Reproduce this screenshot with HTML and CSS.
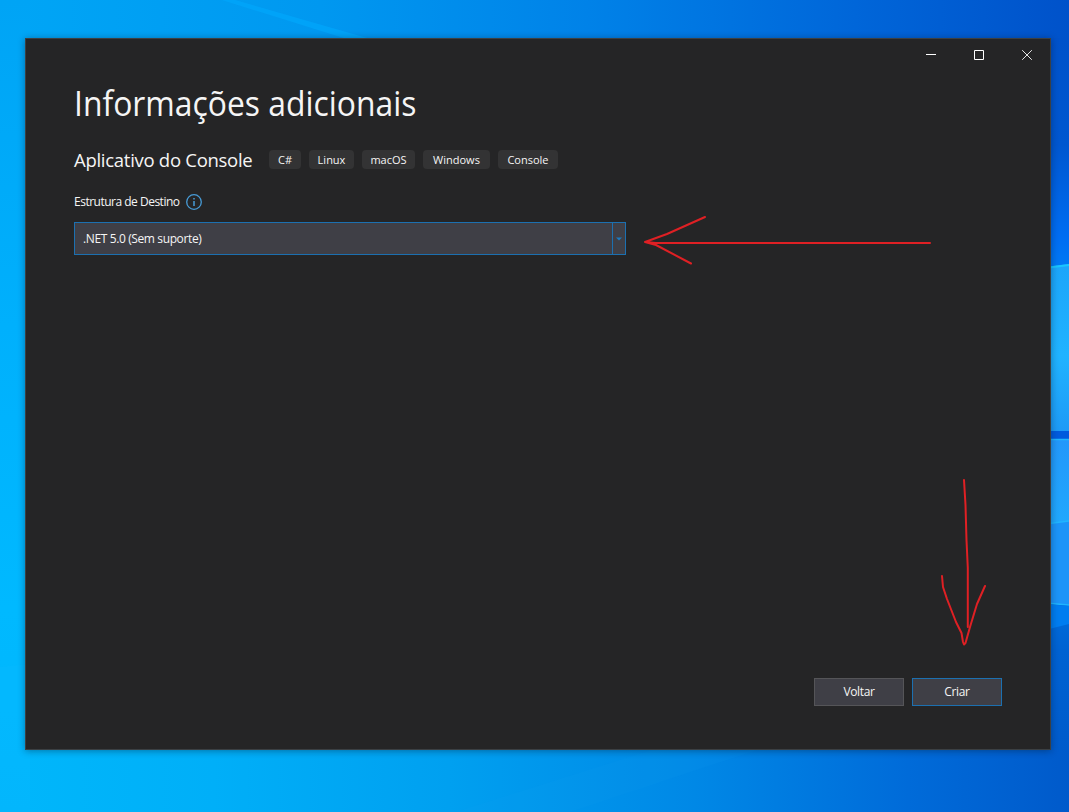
FILE: index.html
```html
<!DOCTYPE html>
<html lang="pt-BR">
<head>
<meta charset="utf-8">
<title>Informações adicionais</title>
<link rel="stylesheet" href="styles.css">
</head>
<body>
<div class="desktop">
  <svg class="wallpaper" width="1069" height="812" viewBox="0 0 1069 812" aria-hidden="true">
    <defs>
      <linearGradient id="top" x1="0" x2="1" y1="0" y2="0"><stop offset="0" stop-color="#00a6f6"/><stop offset=".3" stop-color="#0098f0"/><stop offset=".55" stop-color="#0082e8"/><stop offset=".8" stop-color="#0066d9"/><stop offset="1" stop-color="#0052ca"/></linearGradient>
      <linearGradient id="bottom" x1="0" x2="1" y1="0" y2="0"><stop offset="0" stop-color="#00b7fb"/><stop offset=".2" stop-color="#00aff8"/><stop offset=".42" stop-color="#00a0f0"/><stop offset=".65" stop-color="#0088e6"/><stop offset=".85" stop-color="#006bd9"/><stop offset="1" stop-color="#005acb"/></linearGradient>
      <linearGradient id="left" x1="0" x2="0" y1="0" y2="1"><stop offset="0" stop-color="#00a4f5"/><stop offset=".4" stop-color="#00b0fc"/><stop offset=".75" stop-color="#00b9ff"/><stop offset="1" stop-color="#00b5fb"/></linearGradient>
      <linearGradient id="right" x1="0" x2="0" y1="0" y2="1"><stop offset="0" stop-color="#0052ca"/><stop offset=".15" stop-color="#0057d0"/><stop offset=".28" stop-color="#006df2"/><stop offset=".34" stop-color="#007df4"/><stop offset=".78" stop-color="#0070de"/><stop offset=".86" stop-color="#0062d2"/><stop offset="1" stop-color="#005bcb"/></linearGradient>
      <linearGradient id="pane" x1="0" x2="0" y1="0" y2="1"><stop offset="0" stop-color="#1ca5fa"/><stop offset=".55" stop-color="#20b3ff"/><stop offset="1" stop-color="#1d9af6"/></linearGradient>
      <linearGradient id="pane2" x1="0" x2="0" y1="0" y2="1"><stop offset="0" stop-color="#2397fa"/><stop offset="1" stop-color="#20a8fd"/></linearGradient>
    </defs>
    <rect width="1069" height="400" fill="url(#top)"/>
    <rect y="400" width="1069" height="412" fill="url(#bottom)"/>
    <rect width="30" height="812" fill="url(#left)"/>
    <rect x="1045" y="38" width="24" height="712" fill="url(#right)"/>
    <path d="M222 0H235L374 40H350Z" fill="#00a6fb" opacity=".7"/>
    <path d="M455 812L655 749H760L570 812Z" fill="#18a0f4" opacity=".08"/>
    <path d="M0 667L30 664V812H0Z" fill="#08baff" opacity=".4"/>
    <path d="M1045 267L1069 264V431H1045Z" fill="url(#pane)"/>
    <path d="M1045 268L1069 265" stroke="#19c5ff" stroke-width="2"/>
    <path d="M1045 431H1069V439H1045Z" fill="#005bdd"/>
    <path d="M1045 439H1069V521L1045 524Z" fill="url(#pane2)"/>
    <path d="M1045 524L1069 521V605L1045 603Z" fill="#1c94f8"/>
    <path d="M1045 439.5H1069M1045 524L1069 521M1045 603L1069 605" stroke="#20b5ff" stroke-width="1.5"/>
    <path d="M1045 604L1069 606V624L1045 630Z" fill="#007df0"/>
  </svg>

  <main class="window">
    <div class="titlebar">
      <svg class="caption" width="12" height="12" viewBox="0 0 12 12"><path d="M1 5.5H11" stroke="#fff"/></svg>
      <svg class="caption" width="12" height="12" viewBox="0 0 12 12"><path d="M1.5 1.5H10.5V10.5H1.5Z" fill="none" stroke="#fff"/></svg>
      <svg class="caption" width="12" height="12" viewBox="0 0 12 12"><path d="M1.2 1.2L10.8 10.8M10.8 1.2L1.2 10.8" stroke="#e6e6e6"/></svg>
    </div>
    <h1 class="title">Informações adicionais</h1>
    <div class="project">
      <h2 class="subtitle">Aplicativo do Console</h2>
      <ul class="tags">
        <li class="tag tag-cs">C#</li><li class="tag tag-linux">Linux</li><li class="tag tag-mac">macOS</li><li class="tag tag-windows">Windows</li><li class="tag tag-console">Console</li>
      </ul>
    </div>
    <div class="field-label">
      <span class="label-text">Estrutura de Destino</span>
      <svg width="16" height="16" viewBox="0 0 16 16"><circle cx="8" cy="8" r="7.3" fill="none" stroke="#479bd6" stroke-width="1.3"/><path d="M8 4V5.6M8 7V12" stroke="#479bd6" stroke-width="1.5"/></svg>
    </div>
    <div class="select">
      <span class="select-value">.NET 5.0 (Sem suporte)</span>
      <span class="select-toggle"><svg width="6" height="4" viewBox="0 0 6 4"><path d="M0 .5H6L3 3.5Z" fill="#1c7ac0"/></svg></span>
    </div>
    <div class="actions">
      <button class="button">Voltar</button>
      <button class="button button-primary">Criar</button>
    </div>
  </main>

  <svg class="annotations" width="1069" height="812" viewBox="0 0 1069 812" aria-hidden="true">
    <path d="M930 243H656L645 242M705 217L667 234L645 242L656 245L691 263.500"/>
    <path d="M964 480L965.500 505L966.500 540L967.800 568V627M942 576L943 587L947 599L956 622L961.500 633L963 642L964 644.500L965.500 643L970 627L977 604L985 586"/>
  </svg>
</div>
</body>
</html>
```
FILE: styles.css
```css
* { box-sizing: border-box; }
body { margin: 0; overflow: hidden; font-family: "Open Sans", "Noto Sans", sans-serif; color: #f5f5f5; }
.desktop { position: relative; width: 1069px; height: 812px; padding: 38px 18px 62px 25px; overflow: hidden; }
.wallpaper, .annotations { position: absolute; inset: 0; }
.annotations { fill: none; stroke: #df2024; stroke-width: 2; stroke-linecap: round; stroke-linejoin: round; pointer-events: none; }
.window { position: relative; display: flex; flex-direction: column; width: 1026px; height: 712px; padding: 0 48px; background: #252526; border: 1px solid #3c4043; box-shadow: 0 1px 7px rgba(0, 20, 40, .4); }
.titlebar { display: flex; justify-content: flex-end; gap: 36px; height: 34px; padding-top: 10px; margin-right: -31px; }
.title { align-self: flex-start; margin: 6px 0 0; height: 48px; font-size: 34px; line-height: 48px; font-weight: 400; white-space: nowrap; transform: scaleX(.937); transform-origin: left; }
.project { display: flex; height: 28px; margin-top: 18px; align-items: center; }
.subtitle { width: 195px; margin: 0; padding-top: 1px; font-size: 18.500px; line-height: 29px; font-weight: 400; letter-spacing: -.28px; white-space: nowrap; }
.tags { display: flex; gap: 8px; margin: 0; padding: 0; list-style: none; }
.tag { display: flex; align-items: center; justify-content: center; height: 19px; border-radius: 4px; background: #333334; font-size: 11px; line-height: 19px; font-weight: 500; }
.tag-cs { width: 32px; }
.tag-linux { width: 45px; }
.tag-mac { width: 53px; }
.tag-windows { width: 67px; }
.tag-console { width: 60px; }
.field-label { display: flex; gap: 6px; align-items: center; height: 20px; margin-top: 19px; font-size: 12px; }
.label-text { width: 106px; line-height: 16px; padding-bottom: 1px; white-space: nowrap; letter-spacing: -.5px; }
.select { display: flex; width: 552px; height: 33px; margin-top: 10px; background: #3f3f46; border: 1px solid #1c70b0; font-size: 12px; }
.select-value { flex: 1; padding-left: 8px; line-height: 31px; letter-spacing: -.38px; }
.select-toggle { display: flex; width: 13px; align-items: center; justify-content: center; border-left: 1px solid #1c70b0; }
.actions { display: flex; justify-content: flex-end; gap: 8px; margin: auto 0 43px; }
.button { width: 90px; height: 28px; padding: 0; background: #3f3f46; border: 1px solid #555558; color: #f5f5f5; font: 12px/24px "Open Sans", sans-serif; letter-spacing: -.35px; }
.button-primary { border-color: #1c70b0; }
```
